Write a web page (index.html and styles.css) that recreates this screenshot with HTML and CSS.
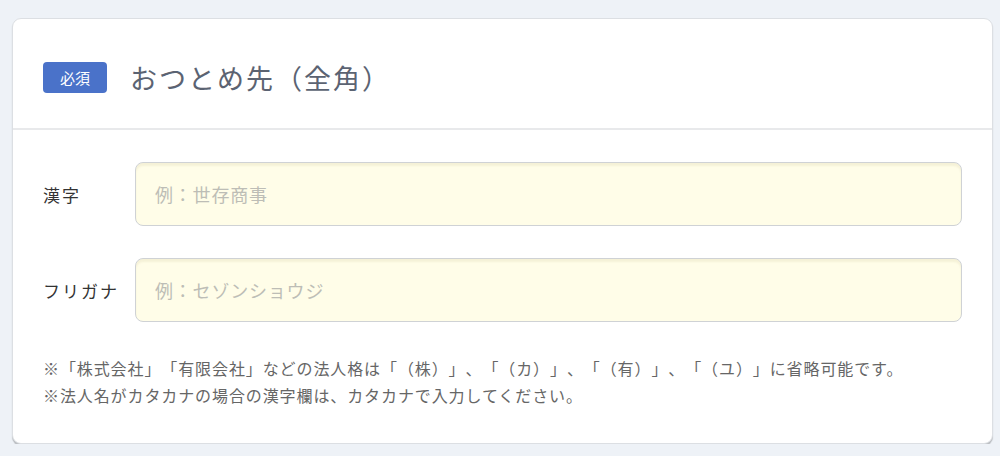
FILE: index.html
```html
<!DOCTYPE html>
<html lang="ja">
<head>
<meta charset="utf-8">
<link rel="stylesheet" href="styles.css">
</head>
<body>
<section class="card">
  <header class="card-head">
    <span class="badge">必須</span>
    <h2 class="title">おつとめ先（全角）</h2>
  </header>
  <div class="card-body">
    <div class="row">
      <label class="label">漢字</label>
      <input class="field" type="text" placeholder="例：世存商事">
    </div>
    <div class="row">
      <label class="label">フリガナ</label>
      <input class="field" type="text" placeholder="例：セゾンショウジ">
    </div>
    <div class="notes">
      <p>※「株式会社」「有限会社」などの法人格は「（株）」、「（カ）」、「（有）」、「（ユ）」に省略可能です。</p>
      <p>※法人名がカタカナの場合の漢字欄は、カタカナで入力してください。</p>
    </div>
  </div>
</section>
</body>
</html>
```
FILE: styles.css
```css
html, body {
  margin: 0;
  padding: 0;
  background: #eef2f7;
  font-family: "Noto Sans CJK JP", "Noto Sans", sans-serif;
  text-spacing-trim: space-all;
}
body {
  padding: 18px 7px 0 12px;
}
.card {
  background: #fff;
  border: 1px solid #dcdfe3;
  border-radius: 9px;
  box-shadow: 0 2px 1px rgba(0,0,0,0.22);
  height: 426px;
  box-sizing: border-box;
}
.card-head {
  display: flex;
  align-items: center;
  height: 111px;
  padding: 0 30px;
  border-bottom: 2px solid #e8e9eb;
  box-sizing: border-box;
  padding-top: 8px;
}
.badge {
  display: inline-flex;
  align-items: center;
  justify-content: center;
  width: 64px;
  height: 31px;
  background: #4a72c9;
  color: #fff;
  font-size: 15px;
  border-radius: 4px;
  box-sizing: border-box;
}
.title {
  margin: 0 0 0 23px;
  font-size: 27px;
  letter-spacing: 2px;
  font-weight: 400;
  color: #5b6372;
}
.card-body {
  padding: 32px 30px 0 30px;
}
.row {
  display: flex;
  align-items: center;
  margin-bottom: 32px;
}
.label {
  width: 92px;
  font-size: 17px;
  letter-spacing: 2px;
  color: #333;
}
.field {
  flex: 1;
  height: 64px;
  box-sizing: border-box;
  border: 1px solid #cfd2d5;
  border-radius: 8px;
  background: #fffde8;
  box-shadow: inset 0 3px 2px rgba(170,160,100,0.12);
  padding: 0 19px;
  font-family: inherit;
  font-size: 18px;
  letter-spacing: 0.8px;
  color: #333;
  outline: none;
}
.field::placeholder {
  color: #bdbdb6;
}
.notes {
  margin-top: 33px;
  font-size: 16px;
  letter-spacing: 0.9px;
  color: #666;
  line-height: 27px;
}
.notes p {
  margin: 0;
}
```
